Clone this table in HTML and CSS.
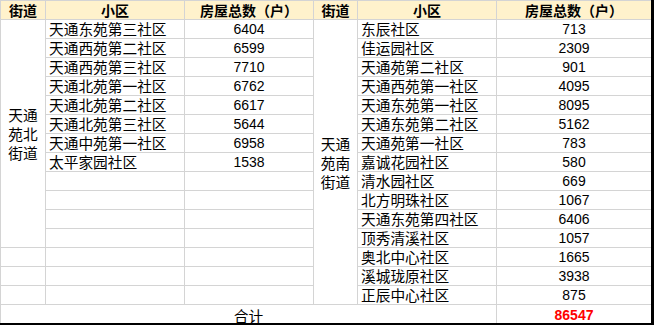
FILE: index.html
```html
<!DOCTYPE html>
<html lang="zh-CN">
<head>
<meta charset="utf-8">
<link rel="stylesheet" href="styles.css">
</head>
<body>
<div class="frame">
  <div class="sheet">
    <div class="cell head">街道</div>
    <div class="cell head">小区</div>
    <div class="cell head">房屋总数（户）</div>
    <div class="cell head">街道</div>
    <div class="cell head">小区</div>
    <div class="cell head">房屋总数（户）</div>

    <div class="cell street north">天通苑北街道</div>
    <div class="cell name">天通东苑第三社区</div><div class="cell num">6404</div>
    <div class="cell street south">天通苑南街道</div>
    <div class="cell name">东辰社区</div><div class="cell num">713</div>

    <div class="cell name">天通西苑第二社区</div><div class="cell num">6599</div>
    <div class="cell name">佳运园社区</div><div class="cell num">2309</div>

    <div class="cell name">天通西苑第三社区</div><div class="cell num">7710</div>
    <div class="cell name">天通苑第二社区</div><div class="cell num">901</div>

    <div class="cell name">天通北苑第一社区</div><div class="cell num">6762</div>
    <div class="cell name">天通西苑第一社区</div><div class="cell num">4095</div>

    <div class="cell name">天通北苑第二社区</div><div class="cell num">6617</div>
    <div class="cell name">天通东苑第一社区</div><div class="cell num">8095</div>

    <div class="cell name">天通北苑第三社区</div><div class="cell num">5644</div>
    <div class="cell name">天通东苑第二社区</div><div class="cell num">5162</div>

    <div class="cell name">天通中苑第一社区</div><div class="cell num">6958</div>
    <div class="cell name">天通苑第一社区</div><div class="cell num">783</div>

    <div class="cell name">太平家园社区</div><div class="cell num">1538</div>
    <div class="cell name">嘉诚花园社区</div><div class="cell num">580</div>

    <div class="cell"></div><div class="cell"></div>
    <div class="cell name">清水园社区</div><div class="cell num">669</div>

    <div class="cell"></div><div class="cell"></div>
    <div class="cell name">北方明珠社区</div><div class="cell num">1067</div>

    <div class="cell"></div><div class="cell"></div>
    <div class="cell name">天通东苑第四社区</div><div class="cell num">6406</div>

    <div class="cell"></div><div class="cell"></div>
    <div class="cell name">顶秀清溪社区</div><div class="cell num">1057</div>

    <div class="cell"></div><div class="cell"></div><div class="cell"></div>
    <div class="cell name">奥北中心社区</div><div class="cell num">1665</div>

    <div class="cell"></div><div class="cell"></div><div class="cell"></div>
    <div class="cell name">溪城珑原社区</div><div class="cell num">3938</div>

    <div class="cell"></div><div class="cell"></div><div class="cell"></div>
    <div class="cell name">正辰中心社区</div><div class="cell num">875</div>

    <div class="cell total-label">合计</div>
    <div class="cell num total">86547</div>
  </div>
</div>
</body>
</html>
```

FILE: styles.css
```css
html, body {
  margin: 0;
  padding: 0;
  background: #ffffff;
}

.frame {
  width: 651px;
  height: 323px;
  border-right: 3px solid #000000;
  border-bottom: 2px solid #000000;
  overflow: hidden;
}

.sheet {
  display: grid;
  grid-template-columns: 44px 138px 128px 43px 138px 154px;
  grid-auto-rows: 18px;
  gap: 1px;
  padding: 1px 0 0 1px;
  background: #d4d4d4;
  width: 650px;
  font-family: "Noto Sans CJK SC", "Noto Sans", sans-serif;
  font-size: 14.7px;
  color: #000000;
}

.cell {
  background: #ffffff;
  line-height: 18px;
  white-space: nowrap;
}

.head {
  background: #fff2cc;
  font-weight: bold;
  font-size: 14px;
  text-align: center;
}

.name {
  padding-left: 3px;
}

.num {
  font-family: "Liberation Sans", Arial, sans-serif;
  font-size: 14px;
  text-align: center;
  line-height: 19px;
}

.street {
  display: flex;
  align-items: center;
  justify-content: center;
  white-space: normal;
  text-align: center;
  padding: 0 4px;
  line-height: 19px;
}

.north {
  grid-row: span 12;
}

.south {
  grid-row: span 15;
}

.total-label {
  grid-column: 1 / span 5;
  text-align: center;
  padding-top: 2px;
}

.total {
  color: #ff0000;
  font-weight: bold;
  padding-top: 1px;
}
```
